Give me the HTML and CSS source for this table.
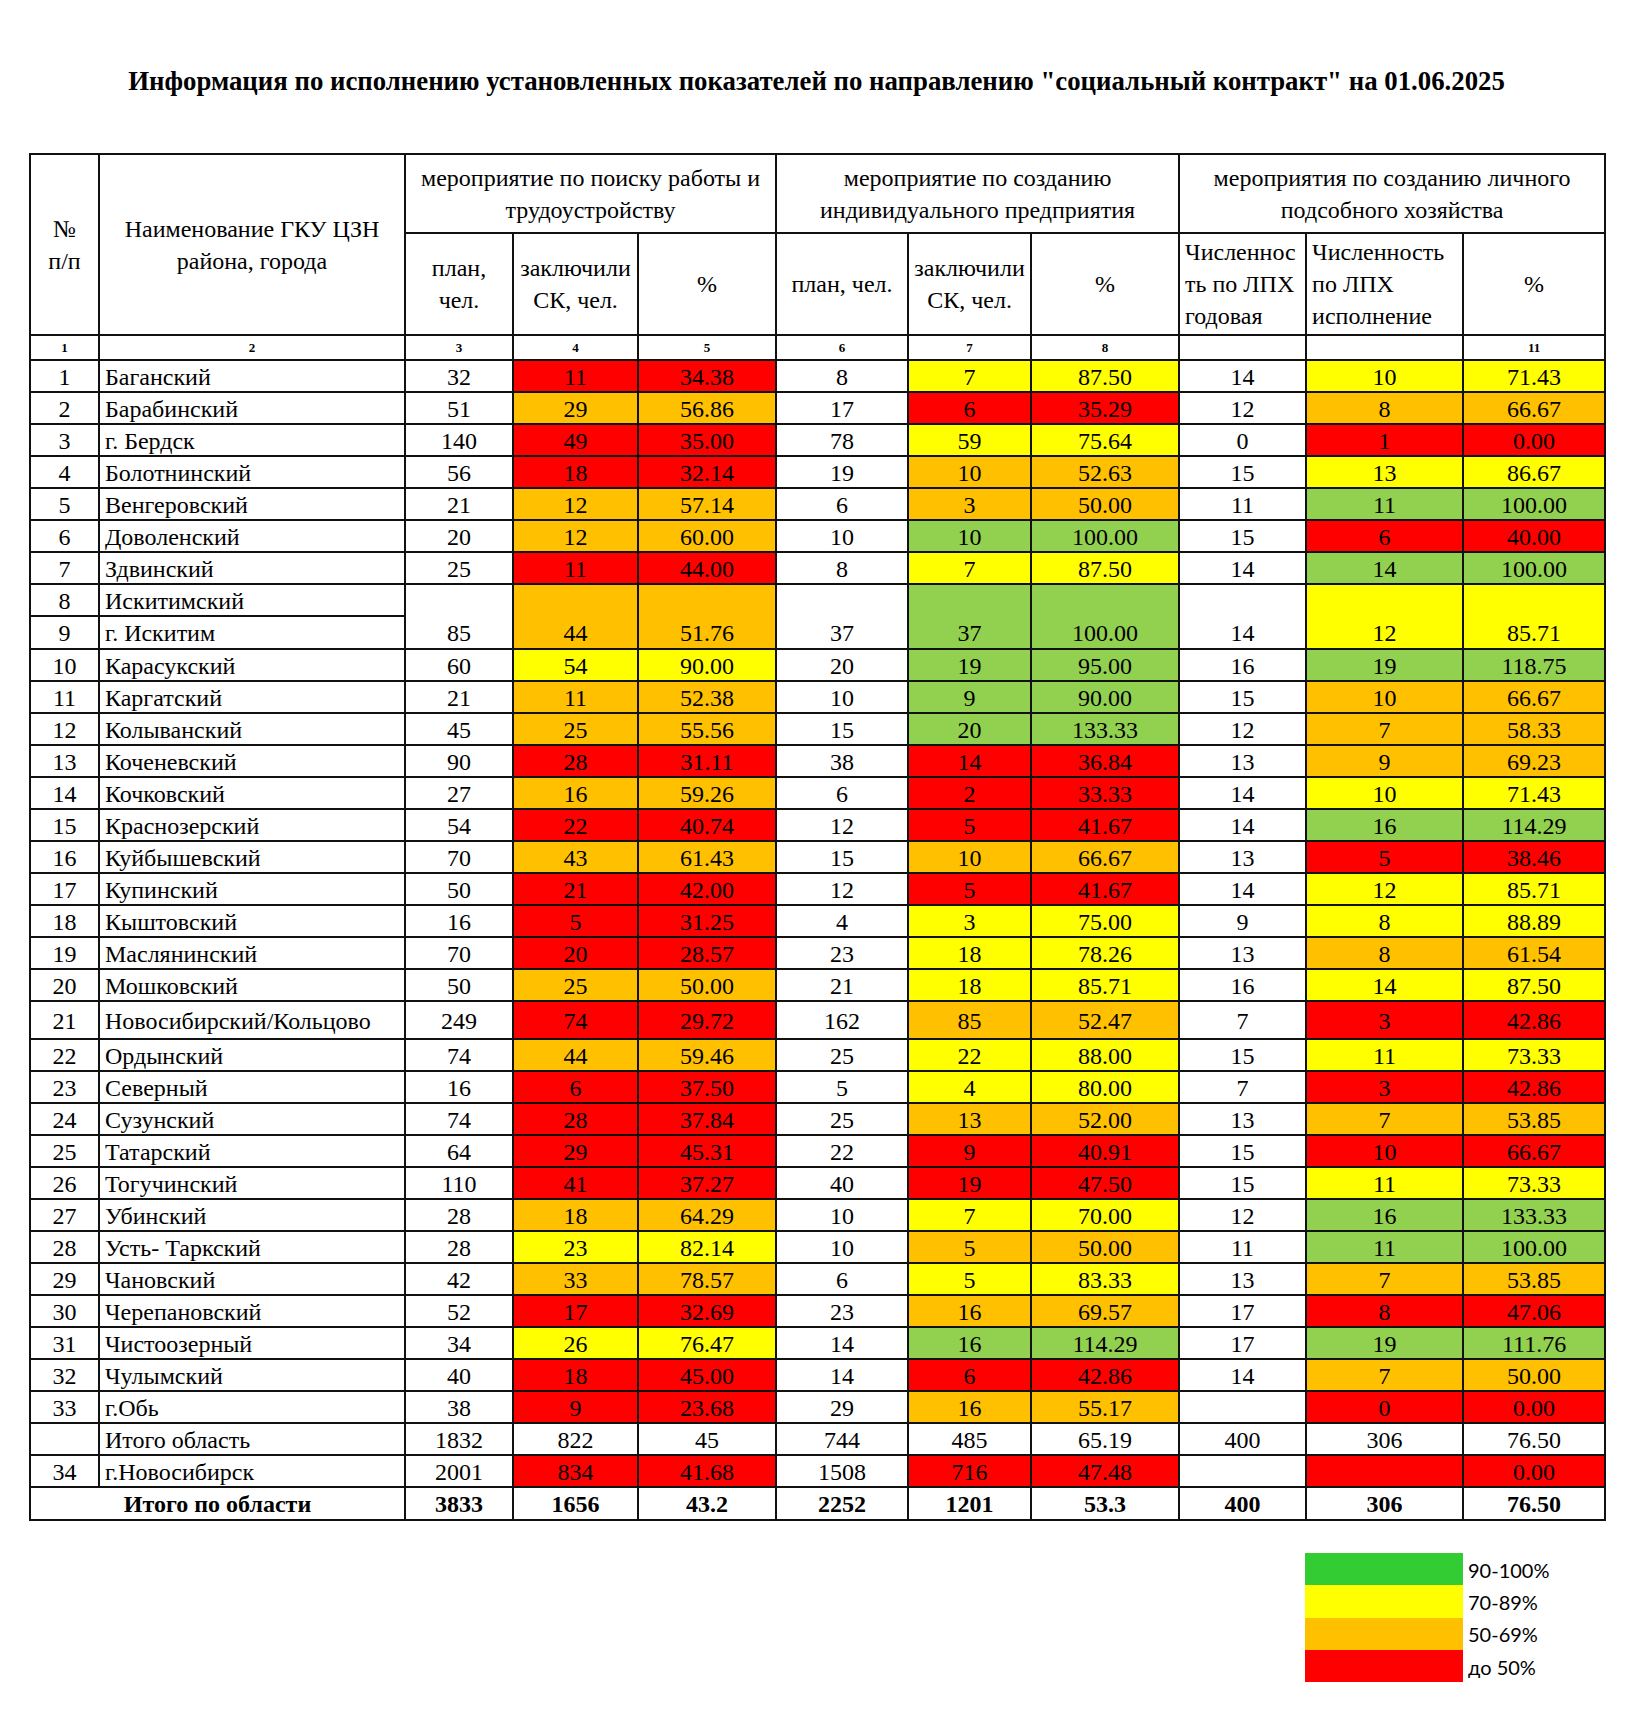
FILE: index.html
```html
<!DOCTYPE html>
<html lang="ru">
<head>
<meta charset="utf-8">
<title>Социальный контракт</title>
<link rel="stylesheet" href="styles.css">
</head>
<body>
<div class="page">
  <h1 class="title">Информация по исполнению установленных показателей по направлению "социальный контракт" на 01.06.2025</h1>
  <table class="report">
    <colgroup>
      <col class="c1"><col class="c2"><col class="c3"><col class="c4"><col class="c5"><col class="c6"><col class="c7"><col class="c8"><col class="c9"><col class="c10"><col class="c11">
    </colgroup>
    <thead>
      <tr class="h1">
        <th rowspan="2">№<br>п/п</th>
        <th rowspan="2">Наименование ГКУ ЦЗН<br>района, города</th>
        <th colspan="3">мероприятие по поиску работы и<br>трудоустройству</th>
        <th colspan="3">мероприятие по созданию<br>индивидуального предприятия</th>
        <th colspan="3">мероприятия по созданию личного<br>подсобного хозяйства</th>
      </tr>
      <tr class="h2">
        <th>план,<br>чел.</th>
        <th>заключили<br>СК, чел.</th>
        <th>%</th>
        <th>план, чел.</th>
        <th>заключили<br>СК, чел.</th>
        <th>%</th>
        <th class="left">Численнос<br>ть по ЛПХ<br>годовая</th>
        <th class="left">Численность<br>по ЛПХ<br>исполнение</th>
        <th>%</th>
      </tr>
      <tr class="nums">
        <th>1</th><th>2</th><th>3</th><th>4</th><th>5</th><th>6</th><th>7</th><th>8</th><th></th><th></th><th>11</th>
      </tr>
    </thead>
    <tbody>
      <tr><td>1</td><td class="name">Баганский</td><td>32</td><td class="r">11</td><td class="r">34.38</td><td>8</td><td class="y">7</td><td class="y">87.50</td><td>14</td><td class="y">10</td><td class="y">71.43</td></tr>
      <tr><td>2</td><td class="name">Барабинский</td><td>51</td><td class="o">29</td><td class="o">56.86</td><td>17</td><td class="r">6</td><td class="r">35.29</td><td>12</td><td class="o">8</td><td class="o">66.67</td></tr>
      <tr><td>3</td><td class="name">г. Бердск</td><td>140</td><td class="r">49</td><td class="r">35.00</td><td>78</td><td class="y">59</td><td class="y">75.64</td><td>0</td><td class="r">1</td><td class="r">0.00</td></tr>
      <tr><td>4</td><td class="name">Болотнинский</td><td>56</td><td class="r">18</td><td class="r">32.14</td><td>19</td><td class="o">10</td><td class="o">52.63</td><td>15</td><td class="y">13</td><td class="y">86.67</td></tr>
      <tr><td>5</td><td class="name">Венгеровский</td><td>21</td><td class="o">12</td><td class="o">57.14</td><td>6</td><td class="o">3</td><td class="o">50.00</td><td>11</td><td class="g">11</td><td class="g">100.00</td></tr>
      <tr><td>6</td><td class="name">Доволенский</td><td>20</td><td class="o">12</td><td class="o">60.00</td><td>10</td><td class="g">10</td><td class="g">100.00</td><td>15</td><td class="r">6</td><td class="r">40.00</td></tr>
      <tr><td>7</td><td class="name">Здвинский</td><td>25</td><td class="r">11</td><td class="r">44.00</td><td>8</td><td class="y">7</td><td class="y">87.50</td><td>14</td><td class="g">14</td><td class="g">100.00</td></tr>
      <tr class="r8"><td>8</td><td class="name">Искитимский</td><td rowspan="2" class="bot">85</td><td rowspan="2" class="o bot">44</td><td rowspan="2" class="o bot">51.76</td><td rowspan="2" class="bot">37</td><td rowspan="2" class="g bot">37</td><td rowspan="2" class="g bot">100.00</td><td rowspan="2" class="bot">14</td><td rowspan="2" class="y bot">12</td><td rowspan="2" class="y bot">85.71</td></tr>
      <tr class="r9"><td>9</td><td class="name">г. Искитим</td></tr>
      <tr><td>10</td><td class="name">Карасукский</td><td>60</td><td class="y">54</td><td class="y">90.00</td><td>20</td><td class="g">19</td><td class="g">95.00</td><td>16</td><td class="g">19</td><td class="g">118.75</td></tr>
      <tr><td>11</td><td class="name">Каргатский</td><td>21</td><td class="o">11</td><td class="o">52.38</td><td>10</td><td class="g">9</td><td class="g">90.00</td><td>15</td><td class="o">10</td><td class="o">66.67</td></tr>
      <tr><td>12</td><td class="name">Колыванский</td><td>45</td><td class="o">25</td><td class="o">55.56</td><td>15</td><td class="g">20</td><td class="g">133.33</td><td>12</td><td class="o">7</td><td class="o">58.33</td></tr>
      <tr><td>13</td><td class="name">Коченевский</td><td>90</td><td class="r">28</td><td class="r">31.11</td><td>38</td><td class="r">14</td><td class="r">36.84</td><td>13</td><td class="o">9</td><td class="o">69.23</td></tr>
      <tr><td>14</td><td class="name">Кочковский</td><td>27</td><td class="o">16</td><td class="o">59.26</td><td>6</td><td class="r">2</td><td class="r">33.33</td><td>14</td><td class="y">10</td><td class="y">71.43</td></tr>
      <tr><td>15</td><td class="name">Краснозерский</td><td>54</td><td class="r">22</td><td class="r">40.74</td><td>12</td><td class="r">5</td><td class="r">41.67</td><td>14</td><td class="g">16</td><td class="g">114.29</td></tr>
      <tr><td>16</td><td class="name">Куйбышевский</td><td>70</td><td class="o">43</td><td class="o">61.43</td><td>15</td><td class="o">10</td><td class="o">66.67</td><td>13</td><td class="r">5</td><td class="r">38.46</td></tr>
      <tr><td>17</td><td class="name">Купинский</td><td>50</td><td class="r">21</td><td class="r">42.00</td><td>12</td><td class="r">5</td><td class="r">41.67</td><td>14</td><td class="y">12</td><td class="y">85.71</td></tr>
      <tr><td>18</td><td class="name">Кыштовский</td><td>16</td><td class="r">5</td><td class="r">31.25</td><td>4</td><td class="y">3</td><td class="y">75.00</td><td>9</td><td class="y">8</td><td class="y">88.89</td></tr>
      <tr><td>19</td><td class="name">Маслянинский</td><td>70</td><td class="r">20</td><td class="r">28.57</td><td>23</td><td class="y">18</td><td class="y">78.26</td><td>13</td><td class="o">8</td><td class="o">61.54</td></tr>
      <tr><td>20</td><td class="name">Мошковский</td><td>50</td><td class="o">25</td><td class="o">50.00</td><td>21</td><td class="y">18</td><td class="y">85.71</td><td>16</td><td class="y">14</td><td class="y">87.50</td></tr>
      <tr class="tall"><td>21</td><td class="name">Новосибирский/Кольцово</td><td>249</td><td class="r">74</td><td class="r">29.72</td><td>162</td><td class="o">85</td><td class="o">52.47</td><td>7</td><td class="r">3</td><td class="r">42.86</td></tr>
      <tr><td>22</td><td class="name">Ордынский</td><td>74</td><td class="o">44</td><td class="o">59.46</td><td>25</td><td class="y">22</td><td class="y">88.00</td><td>15</td><td class="y">11</td><td class="y">73.33</td></tr>
      <tr><td>23</td><td class="name">Северный</td><td>16</td><td class="r">6</td><td class="r">37.50</td><td>5</td><td class="y">4</td><td class="y">80.00</td><td>7</td><td class="r">3</td><td class="r">42.86</td></tr>
      <tr><td>24</td><td class="name">Сузунский</td><td>74</td><td class="r">28</td><td class="r">37.84</td><td>25</td><td class="o">13</td><td class="o">52.00</td><td>13</td><td class="o">7</td><td class="o">53.85</td></tr>
      <tr><td>25</td><td class="name">Татарский</td><td>64</td><td class="r">29</td><td class="r">45.31</td><td>22</td><td class="r">9</td><td class="r">40.91</td><td>15</td><td class="r">10</td><td class="r">66.67</td></tr>
      <tr><td>26</td><td class="name">Тогучинский</td><td>110</td><td class="r">41</td><td class="r">37.27</td><td>40</td><td class="r">19</td><td class="r">47.50</td><td>15</td><td class="y">11</td><td class="y">73.33</td></tr>
      <tr><td>27</td><td class="name">Убинский</td><td>28</td><td class="o">18</td><td class="o">64.29</td><td>10</td><td class="y">7</td><td class="y">70.00</td><td>12</td><td class="g">16</td><td class="g">133.33</td></tr>
      <tr><td>28</td><td class="name">Усть- Таркский</td><td>28</td><td class="y">23</td><td class="y">82.14</td><td>10</td><td class="o">5</td><td class="o">50.00</td><td>11</td><td class="g">11</td><td class="g">100.00</td></tr>
      <tr><td>29</td><td class="name">Чановский</td><td>42</td><td class="o">33</td><td class="o">78.57</td><td>6</td><td class="y">5</td><td class="y">83.33</td><td>13</td><td class="o">7</td><td class="o">53.85</td></tr>
      <tr><td>30</td><td class="name">Черепановский</td><td>52</td><td class="r">17</td><td class="r">32.69</td><td>23</td><td class="o">16</td><td class="o">69.57</td><td>17</td><td class="r">8</td><td class="r">47.06</td></tr>
      <tr><td>31</td><td class="name">Чистоозерный</td><td>34</td><td class="y">26</td><td class="y">76.47</td><td>14</td><td class="g">16</td><td class="g">114.29</td><td>17</td><td class="g">19</td><td class="g">111.76</td></tr>
      <tr><td>32</td><td class="name">Чулымский</td><td>40</td><td class="r">18</td><td class="r">45.00</td><td>14</td><td class="r">6</td><td class="r">42.86</td><td>14</td><td class="o">7</td><td class="o">50.00</td></tr>
      <tr><td>33</td><td class="name">г.Обь</td><td>38</td><td class="r">9</td><td class="r">23.68</td><td>29</td><td class="o">16</td><td class="o">55.17</td><td></td><td class="r">0</td><td class="r">0.00</td></tr>
      <tr><td></td><td class="name">Итого область</td><td>1832</td><td>822</td><td>45</td><td>744</td><td>485</td><td>65.19</td><td>400</td><td>306</td><td>76.50</td></tr>
      <tr><td>34</td><td class="name">г.Новосибирск</td><td>2001</td><td class="r">834</td><td class="r">41.68</td><td>1508</td><td class="r">716</td><td class="r">47.48</td><td></td><td class="r"></td><td class="r">0.00</td></tr>
      <tr class="total"><td colspan="2">Итого по области</td><td>3833</td><td>1656</td><td>43.2</td><td>2252</td><td>1201</td><td>53.3</td><td>400</td><td>306</td><td>76.50</td></tr>
    </tbody>
  </table>
  <div class="legend">
    <div class="legend-row"><span class="swatch sw-green"></span><span class="legend-label">90-100%</span></div>
    <div class="legend-row"><span class="swatch sw-yellow"></span><span class="legend-label">70-89%</span></div>
    <div class="legend-row"><span class="swatch sw-orange"></span><span class="legend-label">50-69%</span></div>
    <div class="legend-row"><span class="swatch sw-red"></span><span class="legend-label">до 50%</span></div>
  </div>
</div>
</body>
</html>
```

FILE: styles.css
```css
html, body {
  margin: 0;
  padding: 0;
  background: #ffffff;
}

body {
  font-family: "Liberation Serif", "Times New Roman", serif;
  color: #000000;
}

.page {
  padding: 65px 0 0 29px;
}

.title {
  margin: 0;
  width: 1575px;
  text-align: center;
  font-size: 26.8px;
  line-height: 32px;
  font-weight: bold;
}

.report {
  margin-top: 56px;
  width: 1575px;
  table-layout: fixed;
  border-collapse: collapse;
}

.c1 { width: 69px; }
.c2 { width: 306px; }
.c3 { width: 108px; }
.c4 { width: 125px; }
.c5 { width: 138px; }
.c6 { width: 132px; }
.c7 { width: 123px; }
.c8 { width: 148px; }
.c9 { width: 127px; }
.c10 { width: 157px; }
.c11 { width: 142px; }

.report th,
.report td {
  border: 2px solid #111111;
  padding: 0 4px;
  font-size: 24px;
  line-height: 28px;
  font-weight: normal;
  text-align: center;
  vertical-align: middle;
  white-space: nowrap;
  overflow: hidden;
}

.report .h1 th {
  height: 77px;
  line-height: 32px;
}

.report .h2 th {
  height: 100px;
  line-height: 32px;
}

.report th.left {
  text-align: left;
  padding-left: 5px;
}

.report .nums th {
  height: 23px;
  font-size: 13px;
  line-height: 16px;
  font-weight: bold;
}

.report tbody td {
  height: 29px;
  padding-top: 1px;
  padding-bottom: 0;
}

.report td.name {
  text-align: left;
  padding-left: 5px;
}

.report tr.tall td {
  height: 35px;
}

.report tr.r9 td {
  height: 30px;
}

.report td.bot {
  vertical-align: bottom;
  padding-bottom: 1px;
}

.report tr.total td {
  font-weight: bold;
  height: 30px;
}

.r { background: #ff0000; }
.o { background: #ffc000; }
.y { background: #ffff00; }
.g { background: #92d050; }

.legend {
  margin: 32px 0 0 1276px;
  display: flex;
  flex-direction: column;
}

.legend-row {
  display: flex;
  align-items: center;
  height: 32.3px;
}

.swatch {
  display: block;
  width: 158px;
  height: 100%;
}

.sw-green { background: #33cc33; }
.sw-yellow { background: #ffff00; }
.sw-orange { background: #ffc000; }
.sw-red { background: #ff0000; }

.legend-label {
  margin-left: 5px;
  font-family: Lato, "Open Sans", sans-serif;
  font-size: 20px;
  line-height: 24px;
  padding-top: 1px;
  color: #000000;
}
```
